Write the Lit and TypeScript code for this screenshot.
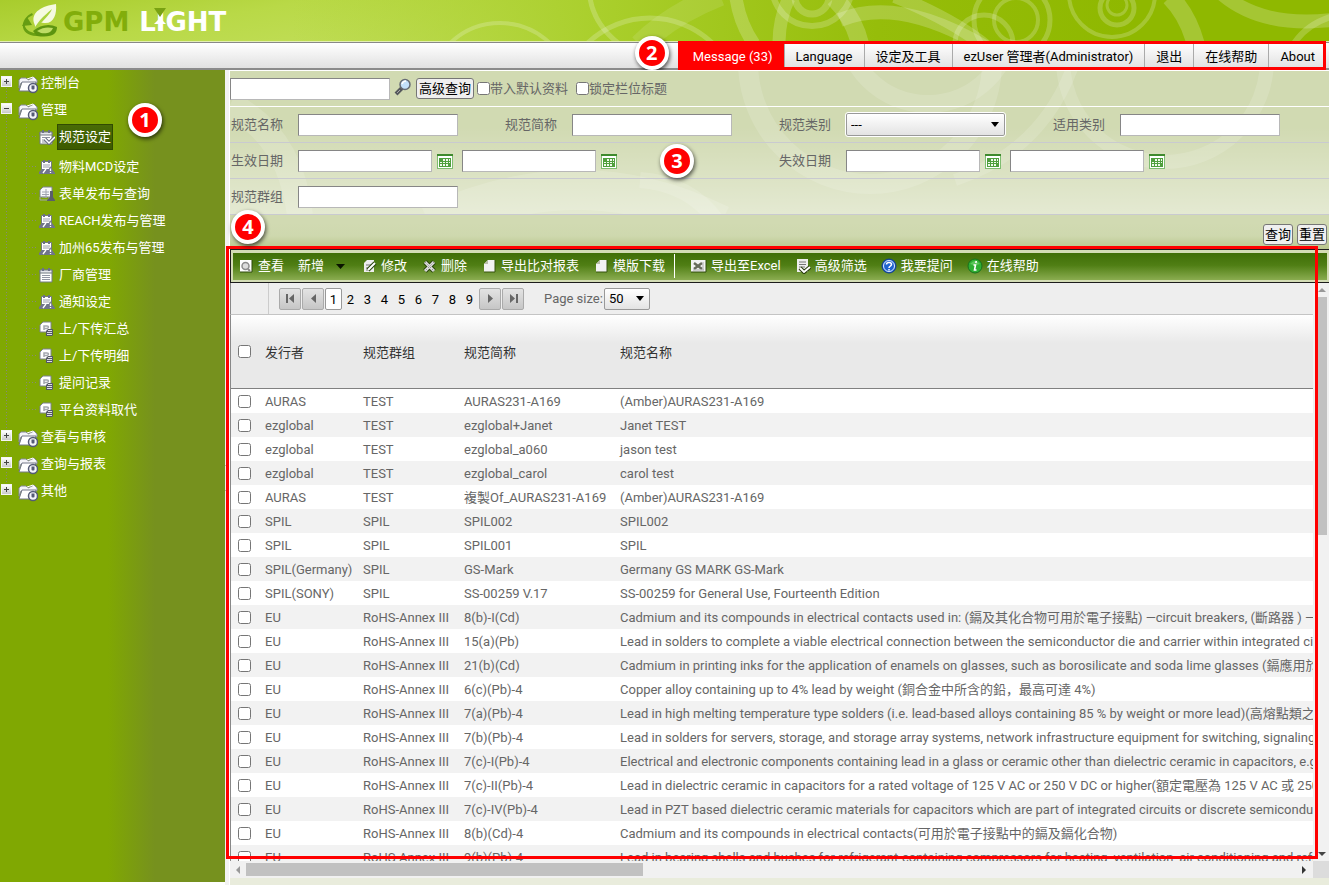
import { LitElement, html, css, svg, nothing } from "lit";
import { customElement } from "lit/decorators.js";

type Row = [string, string, string, string];

const ROWS: Row[] = [
  ["AURAS", "TEST", "AURAS231-A169", "(Amber)AURAS231-A169"],
  ["ezglobal", "TEST", "ezglobal+Janet", "Janet TEST"],
  ["ezglobal", "TEST", "ezglobal_a060", "jason test"],
  ["ezglobal", "TEST", "ezglobal_carol", "carol test"],
  ["AURAS", "TEST", "複製Of_AURAS231-A169", "(Amber)AURAS231-A169"],
  ["SPIL", "SPIL", "SPIL002", "SPIL002"],
  ["SPIL", "SPIL", "SPIL001", "SPIL"],
  ["SPIL(Germany)", "SPIL", "GS-Mark", "Germany GS MARK GS-Mark"],
  ["SPIL(SONY)", "SPIL", "SS-00259 V.17", "SS-00259 for General Use, Fourteenth Edition"],
  ["EU", "RoHS-Annex III", "8(b)-I(Cd)", "Cadmium and its compounds in electrical contacts used in: (鎘及其化合物可用於電子接點) —circuit breakers, (斷路器 ) — thermal sensing controls"],
  ["EU", "RoHS-Annex III", "15(a)(Pb)", "Lead in solders to complete a viable electrical connection between the semiconductor die and carrier within integrated circuit flip chip packages"],
  ["EU", "RoHS-Annex III", "21(b)(Cd)", "Cadmium in printing inks for the application of enamels on glasses, such as borosilicate and soda lime glasses (鎘應用於玻璃上的印刷油墨)"],
  ["EU", "RoHS-Annex III", "6(c)(Pb)-4", "Copper alloy containing up to 4% lead by weight (銅合金中所含的鉛，最高可達 4%)"],
  ["EU", "RoHS-Annex III", "7(a)(Pb)-4", "Lead in high melting temperature type solders (i.e. lead-based alloys containing 85 % by weight or more lead)(高熔點類之焊料中的鉛)"],
  ["EU", "RoHS-Annex III", "7(b)(Pb)-4", "Lead in solders for servers, storage, and storage array systems, network infrastructure equipment for switching, signaling, transmission"],
  ["EU", "RoHS-Annex III", "7(c)-I(Pb)-4", "Electrical and electronic components containing lead in a glass or ceramic other than dielectric ceramic in capacitors, e.g. piezoelectronic devices"],
  ["EU", "RoHS-Annex III", "7(c)-II(Pb)-4", "Lead in dielectric ceramic in capacitors for a rated voltage of 125 V AC or 250 V DC or higher(額定電壓為 125 V AC 或 250 V DC 以上)"],
  ["EU", "RoHS-Annex III", "7(c)-IV(Pb)-4", "Lead in PZT based dielectric ceramic materials for capacitors which are part of integrated circuits or discrete semiconductors"],
  ["EU", "RoHS-Annex III", "8(b)(Cd)-4", "Cadmium and its compounds in electrical contacts(可用於電子接點中的鎘及鎘化合物)"],
  ["EU", "RoHS-Annex III", "9(b)(Pb)-4", "Lead in bearing shells and bushes for refrigerant-containing compressors for heating, ventilation, air conditioning and refrigeration"],
];

const MENU = ["Message (33)", "Language", "设定及工具", "ezUser 管理者(Administrator)", "退出", "在线帮助", "About"];

const CHILDREN: [string, string][] = [
  ["规范设定", "check"],
  ["物料MCD设定", "alert"],
  ["表单发布与查询", "stamp"],
  ["REACH发布与管理", "alert"],
  ["加州65发布与管理", "alert"],
  ["厂商管理", "list"],
  ["通知设定", "alert"],
  ["上/下传汇总", "record"],
  ["上/下传明细", "record"],
  ["提问记录", "record"],
  ["平台资料取代", "record"],
];

const sheet = svg`<path d="M1 3h12v12H1z" fill="#fff" stroke="#737a80"/><path d="M1 3h12v3H1z" fill="#e6e7ee" stroke="#737a80"/><path d="M4 1v3M10 1v3" stroke="#6c7188" stroke-width="2"/>`;

const treeIcons: Record<string, unknown> = {
  folder: svg`<path d="M1 5l2-2h5l2 2 6-3 3 3v3H3L1 13z" fill="#f4f4f8" stroke="#878b9a"/><path d="M4 7h14l-3 9H1z" fill="#fff" stroke="#747989"/><path d="M9 4l6-2 2 3" fill="none" stroke="#fff"/><circle cx="15" cy="13" r="4.500" fill="#f5f5fa" stroke="#555b76" stroke-width="1.500"/><path d="M13.500 10.500v3q0 1 1 1h1q1 0 1-1v-3" fill="#555b76"/>`,
  check: svg`${sheet}<path d="M3 8.500h8M3 11h5M3 13h4" stroke="#8d92a0"/><path d="M6 10l4 4 6-6" fill="none" stroke="#63697d" stroke-width="3.500"/><path d="M6 10l4 4 6-6" fill="none" stroke="#fff" stroke-width="1.500"/>`,
  alert: svg`<path d="M2.500 2.500h10v9h-10z" fill="#fff" stroke="#737a80"/><path d="M5 1v3M10 1v3" stroke="#6c7188" stroke-width="2"/><path d="M4 6h7M4 8h6" stroke="#9a9eac"/><path d="M0 15v-2l3-3h10l3 4v1z" fill="#70758b"/><path d="M11 7l5 8H8z" fill="#70758b"/><path d="M4 14l3-4M11.500 9.500V12M11.500 13v1" stroke="#fff" stroke-width="1.300"/>`,
  stamp: svg`<path d="M4 1h9v10H1V4z" fill="#f8f8fa" stroke="#7c8190"/><path d="M1 11v3h9v-3M3 6h7M3 8.500h7M3 11h5M7 3v9" fill="none" stroke="#a0a4b0"/><path d="M11 5h3v6l2 3v1H8v-1l3-3z" fill="#5a5e6b"/>`,
  list: svg`${sheet}<path d="M3 8.500h8M3 10.500h8M3 12.500h8" stroke="#9296a3"/>`,
  record: svg`<path d="M4 1h8v10H1V4z" fill="#fff" stroke="#7c8190"/><path d="M5 9V5h3q1.500 0 1.500 1T8 7.500H5" fill="none" stroke="#a4a7ae" stroke-width="1.500"/><path d="M9 8h5v6l-1 1H7v-5z" fill="#545866"/><path d="M9 9.500h4M8 11.500h5M8 13.500h5" stroke="#fff" stroke-width=".8"/>`,
};

const toolIcons: Record<string, unknown> = {
  view: svg`<path d="M2 2h12v12H2z" fill="#fff"/><path d="M14 2v12H2" fill="none" stroke="#2f4a0c"/><circle cx="7.500" cy="8" r="3.500" fill="#ddd" stroke="#8c8c8c" stroke-width="1.500"/><path d="M10 11l2 2" stroke="#888" stroke-width="2"/>`,
  edit: svg`<path d="M3 5l3-3h7v12H3z" fill="#eee"/><path d="M5 7h5M5 10h4M5 12h3" stroke="#777"/><path d="M7 12l7-7" stroke="#28450a" stroke-width="4"/><path d="M7 12l7-7" stroke="#fff" stroke-width="2"/>`,
  remove: svg`<path d="M4 4l9 9M13 4l-9 9" stroke="#2b460e" stroke-width="5"/><path d="M4 4l9 9M13 4l-9 9" stroke="#dedede" stroke-width="3"/><path d="M4 4l9 9M13 4l-9 9" stroke="#777" stroke-dasharray="1 1.500"/>`,
  page: svg`<path d="M3 6l4-4h7v12H3z" fill="#f2f2f2"/><path d="M3 6h4V2" fill="#b9bda9"/><path d="M14 2v12H3" fill="none" stroke="#36540f"/>`,
  excel: svg`<path d="M0 2h15v12H0z" fill="#f3f3f3"/><path d="M15 2v12H0" fill="none" stroke="#2f4a0c"/><path d="M3 5l8 6M11 5l-8 6" stroke="#686c5c" stroke-width="2.500"/><path d="M12 4v8M2 12h11" stroke="#aaa"/>`,
  filter: svg`<path d="M2 1h11v13H2z" fill="#eee"/><path d="M4 4h7M4 6.500h7M4 9h6M4 11.500h4" stroke="#767676"/><path d="M5 10l4 4 6-5" fill="none" stroke="#263a0a" stroke-width="4"/><path d="M5 10l4 4 6-5" fill="none" stroke="#fff" stroke-width="2"/>`,
  ask: svg`<circle cx="8" cy="8" r="7" fill="#1f63d0" stroke="#123c8c"/><circle cx="8" cy="8" r="5.500" fill="none" stroke="#dce9ff"/><path d="M5.500 6.500q0-2 2.500-2t2.500 2q0 1-1.500 1.800-1 .5-1 1.700M8 11v1.500" fill="none" stroke="#fff" stroke-width="1.500"/>`,
  info: svg`<circle cx="8" cy="8" r="7" fill="#2eaf33" stroke="#19711d"/><path d="M3 6q5-6 10 0-5 2-10 0" fill="#5cc75c"/><path d="M9.300 3L8.800 5M6.500 7h2l-1 5h2" fill="none" stroke="#fff" stroke-width="1.600"/>`,
};

const calendar = html`<svg viewBox="0 0 16 16" width="16" height="16" aria-hidden="true"><path d="M0 1h16v15H0z" fill="#7fbd70"/><path d="M0 1h16v2H0z" fill="#3f8a2e"/><path d="M1 3h14v12H1z" fill="#fff"/><path d="M2 5h12v9H2z" fill="#4f9f3d"/><path d="M6 6h2v2H6zM9 6h2v2H9zM12 6h1v2h-1zM3 9h2v1H3zM6 9h2v1H6zM9 9h2v1H9zM12 9h1v1h-1zM3 11h2v2H3zM6 11h2v2H6zM9 11h2v2H9z" fill="#f0faed"/></svg>`;

@customElement("app-root")
export class AppRoot extends LitElement {
  static styles = css`
    :host {
      display: flex;
      flex-direction: column;
      height: 100vh;
      overflow: hidden;
      font: 13px/18px Roboto, "Noto Sans CJK SC", sans-serif;
      color: #666;
      background: #fff;
    }
    * { box-sizing: border-box; }
    svg { display: block; flex: none; }
    button, input, select { font: inherit; margin: 0; }
    a { color: inherit; text-decoration: none; }

    .banner {
      position: relative;
      display: flex;
      align-items: center;
      height: 42px;
      flex: none;
      padding-left: 20px;
      overflow: hidden;
      background: linear-gradient(170deg, #a8cc2c 0, #b9d947 20%, #cae36c 62%);
      border-bottom: 1px solid #e3efb4;
    }
    .banner::before {
      content: "";
      position: absolute;
      inset: 0;
      background: linear-gradient(90deg, transparent 22%, #aacf2c 45%, #96bd0a 66%, #8fb800 85%);
    }
    .swirls { position: absolute; right: 0; top: 0; }
    .leaf { position: relative; }
    .brand {
      position: relative;
      display: flex;
      gap: 10px;
      padding: 3px 0 0 3px;
      font: bold 26px/28px "DejaVu Sans", sans-serif;
      color: #82ad0b;
    }
    .light { position: relative; color: #fff; }
    .spark { position: absolute; left: 15px; top: 0; }

    .menubar {
      display: flex;
      justify-content: flex-end;
      height: 28px;
      flex: none;
      padding-right: 3px;
      background: linear-gradient(#fff, #e1e1e1);
      border-top: 1px solid #888;
      border-bottom: 2px solid #8b8b8b;
    }
    .menu { position: relative; display: flex; padding-left: 3px; color: #000; margin-bottom: -1px; }
    .menu::after {
      content: "";
      position: absolute;
      inset: -2px 0 -1px;
      border: 3px solid #f00;
      pointer-events: none;
    }
    .menu a { padding: 5px 11px 0; border-left: 1px solid #aaa; white-space: nowrap; }
    .menu .current { background: #f00; border-color: #f00; color: #fff; }

    .body {
      position: relative;
      display: grid;
      grid-template-columns: 225px 5px minmax(0, 1fr);
      grid-template-rows: minmax(0, 1fr);
      flex: 1;
      min-height: 0;
    }
    .side {
      margin-bottom: 3px;
      background: linear-gradient(90deg, #80a802 0 108px, #76911e 155px);
      color: #fff;
      overflow: hidden;
    }
    .tree, .tree ul { list-style: none; margin: 0; padding: 0; }
    .node { display: flex; align-items: center; height: 27px; padding: 0 0 2px 1px; }
    .toggle {
      width: 11px; height: 11px; padding: 0;
      border: 1px solid #f5f5f5;
      background: linear-gradient(#fff, #c9c9c9);
      margin-bottom: 2px;
      display: grid;
      place-items: center;
    }
    .node .folder { margin: 3px 3px 0 6px; }
    .tree { background: repeating-linear-gradient(#878a78 0 1px, transparent 1px 3px) 6px 12px / 1px 408px no-repeat; }
    .tree .leafs {
      padding-left: 26px;
      background: repeating-linear-gradient(#878a78 0 1px, transparent 1px 3px) 26px 0 / 1px 286px no-repeat;
    }
    .item { display: flex; align-items: center; height: 27px; gap: 2px; padding-bottom: 2px; }
    .item::before {
      content: "";
      width: 11px;
      height: 1px;
      background: repeating-linear-gradient(90deg, #878a78 0 1px, transparent 1px 3px);
    }
    .item a { padding: 0 2px; }
    .item.on { margin-bottom: 3px; }
    .on a { background: linear-gradient(#486b06, #3d5a00); border: 1px solid #314b02; padding: 3px 1px; }

    .split { background: #f2f2f2; border-right: 1px solid #fff; display: grid; align-items: center; }
    .grip { height: 26px; border: 1px solid #bbb; border-width: 1px 0; }
    .main { display: flex; flex-direction: column; min-width: 0; background: #e9ecdc; padding-bottom: 7px; }

    .query {
      position: relative;
      flex: none;
      height: 179px;
      border-top: 1px solid #fff;
      background: linear-gradient(#d1dab2 0 152px, #ced8ae 165px, #b9c68c);
      overflow: hidden;
    }
    .quick { position: relative; display: flex; align-items: center; height: 36px; border-bottom: 1px solid #fff; }
    .box {
      height: 22px;
      width: 160px;
      min-width: 0;
      padding: 0 4px;
      border: 1px solid;
      border-color: #868686 #b8b8b8 #b8b8b8 #868686;
      background: #fff;
    }
    .glass { padding: 0; border: 0; background: none; margin: 0 4px 4px; }
    .push {
      height: 21px;
      padding: 0 1px;
      border: 1px solid #767676;
      border-radius: 3px;
      background: #efefef;
      color: #000;
      line-height: 17px;
      white-space: nowrap;
    }
    .quick .push { padding: 0 2px; }
    .tick { display: flex; align-items: center; margin: 0 5px 0 3px; }
    input[type="checkbox"] { width: 13px; height: 13px; flex: none; }
    .fields { position: relative; background: linear-gradient(#fff0 20px, #ffffff6b); }
    .line { display: grid; grid-template-columns: repeat(4, 1fr); align-items: center; height: 36px; padding-right: 3px; border-bottom: 1px solid #c9cad0; }
    .field { display: flex; align-items: center; }
    .wide { grid-column: span 2; }
    .field label { width: 68px; padding-left: 1px; flex: none; }
    .date { width: 134px; }
    .pick { padding: 0; border: 0; background: none; margin: 0 9px 0 5px; }
    .drop {
      appearance: none;
      width: 159px;
      height: 23px;
      padding: 0 4px;
      border: 1px solid #999;
      border-radius: 2px;
      outline: 1px solid #fff;
      color: #000;
      background:
        url("data:image/svg+xml,%3Csvg xmlns='http://www.w3.org/2000/svg' width='8' height='5'%3E%3Cpath d='M0 0h8L4 5z'/%3E%3C/svg%3E") right 5px center no-repeat,
        linear-gradient(#fff, #e3e3e3);
    }
    .actions { position: relative; display: flex; justify-content: flex-end; gap: 4px; padding: 9px 2px 0; }

    .panel { position: relative; flex: 1; min-height: 0; display: flex; flex-direction: column; background: #f1f1f1; }
    .frame { position: absolute; inset: -3px 11px 19px -4px; border: 3px solid #f00; pointer-events: none; }
    .tools {
      flex: none;
      height: 34px;
      padding: 3px 2px 2px;
      background: #d3dcb5;
      border: solid #1c1c1c;
      border-width: 1px 0 1px 1px;
    }
    .strip {
      display: flex;
      align-items: center;
      gap: 14px;
      height: 27px;
      padding: 0 0 1px 5px;
      color: #fff;
      background: linear-gradient(#3f6e07, #4f7e14 45%, #8aac50);
      overflow: hidden;
    }
    .tool { display: flex; align-items: center; gap: 4px; padding: 0; border: 0; background: none; color: inherit; white-space: nowrap; }
    .tool .caret { margin: 0 2px 0 8px; }
    .bar { width: 1px; height: 24px; background: #fff; margin: 0 2px 0 -5px; }
    .pager {
      flex: none;
      display: flex;
      align-items: center;
      height: 32px;
      background: #eee;
      border-bottom: 1px solid #c4c4c4;
      border-left: 1px solid #888;
    }
    .pager::before { content: ""; width: 37px; align-self: stretch; border-right: 1px solid #ccc; margin-right: 10px; }
    .nav {
      width: 22px;
      height: 22px;
      margin-right: 1px;
      padding: 0;
      border: 1px solid #aaa;
      border-radius: 2px;
      background: linear-gradient(#e3e3e3, #c6c6c6);
      display: grid;
      place-items: center;
    }
    .num { width: 17px; height: 22px; line-height: 21px; text-align: center; border: 1px solid transparent; color: #000; }
    .num.on { background: #fff; border-color: #999; border-radius: 2px; }
    .nums { display: flex; margin-right: 1px; }
    .size { padding: 0 1px 0 19px; }
    .sizes { width: 46px; height: 22px; outline: 0; }

    .scroller { flex: 1; min-height: 0; display: grid; grid-template-columns: minmax(0, 1fr) 16px; grid-template-rows: minmax(0, 1fr) 17px; }
    .view { min-width: 0; overflow: hidden; background: #fff; display: flex; flex-direction: column; }
    .sheet { overflow: hidden; border-left: 1px solid #888; min-height: 0; }
    table { width: 100%; table-layout: fixed; border-collapse: separate; border-spacing: 0; }
    th, td { padding: 2px 0 0 7px; text-align: left; font-weight: normal; white-space: nowrap; overflow: hidden; }
    th { height: 74px; color: #333; border-bottom: 1px solid #808080; background: linear-gradient(#fff, #e9e9e9 28px); }
    td { height: 24px; }
    td input, th input { display: block; margin-bottom: 2px; }
    tr:nth-child(even) td { background: #f2f2f2; }
    .pick-col { width: 27px; }
    .a { width: 98px; }
    .b { width: 101px; }
    .c { width: 156px; }
    .vbar, .hbar { background: #f1f1f1; display: flex; align-items: center; }
    .vbar { flex-direction: column; padding: 5px 2px 4px 4px; }
    .vthumb { width: 10px; height: 238px; margin: 4px 0 auto; background: #c1c1c1; }
    .hbar { padding: 0 6px 0 5px; }
    .hthumb { width: 37%; height: 13px; margin: 0 auto 0 6px; background: #c1c1c1; }
    .corner { background: #dcdcdc; }

    .badge {
      position: absolute;
      width: 34px;
      height: 34px;
      border: 4px solid #fff;
      border-radius: 50%;
      background: #f00;
      color: #fff;
      font: bold 20px/26px "Open Sans", sans-serif;
      text-align: center;
      box-shadow: 1px 2px 4px #000a;
    }
    .b1 { left: 128px; top: 33px; }
    .b2 { left: -43px; top: -7px; }
    .b3 { left: 660px; top: 74px; }
    .b4 { left: 231px; top: 140px; }
  `;

  private tri(d: string, fill = "#222", w = 9, h = 9) {
    return html`<svg width=${w} height=${h} viewBox="0 0 ${w} ${h}" aria-hidden="true"><path d=${d} fill=${fill} /></svg>`;
  }

  private root(label: string, open = false) {
    return html`<div class="node">
      <button class="toggle" aria-label=${open ? "收起" : "展开"}>
        <svg width="7" height="7" viewBox="0 0 7 7"><path d=${open ? "M1 3.5h5" : "M1 3.5h5M3.500 1v5"} stroke="#444" /></svg>
      </button>
      <svg class="folder" width="20" height="19" viewBox="0 0 20 19" aria-hidden="true">${treeIcons.folder}</svg>
      <a href="#">${label}</a>
    </div>`;
  }

  private tool(label: string, icon?: string, caret = false) {
    return html`<button class="tool">
      ${icon ? html`<svg width="16" height="16" viewBox="0 0 16 16" aria-hidden="true">${toolIcons[icon]}</svg>` : nothing}
      <span>${label}</span>
      ${caret ? html`<svg class="caret" width="9" height="5" viewBox="0 0 9 5"><path d="M0 0h9L4.500 5z" fill="#0a1400" /></svg>` : nothing}
    </button>`;
  }

  private text(id: string, label: string) {
    return html`<div class="field"><label for=${id}>${label}</label><input class="box" id=${id} /></div>`;
  }

  private dates(id: string, label: string) {
    return html`<div class="field wide">
      <label for=${id}>${label}</label>
      <input class="box date" id=${id} /><button class="pick" aria-label="日历">${calendar}</button>
      <input class="box date" aria-label=${label} /><button class="pick" aria-label="日历">${calendar}</button>
    </div>`;
  }

  render() {
    return html`
      <header class="banner">
        <svg class="swirls" width="900" height="42" viewBox="429 0 900 42" fill="none" stroke="#fff" aria-hidden="true">
          <g stroke-opacity=".2">
            <circle cx="500" cy="95" r="72" stroke-width="4" />
            <circle cx="650" cy="108" r="90" stroke-width="5" />
            <path d="M590 -2q5 30 35 50" stroke-width="5" />
            <path d="M640 45q30-30 80-50" stroke-width="22" stroke-opacity=".1" />
            <path d="M736 -2q4 26 18 46" stroke-width="13" />
            <path d="M789 -2q-10 20-10 46" stroke-width="13" />
            <path d="M834 -2q20 20 26 46" stroke-width="18" />
            <circle cx="812" cy="-14" r="40" stroke-width="6" />
            <circle cx="812" cy="-3" r="17" stroke-width="7" />
            <path d="M840 20q60-25 150 30" stroke-width="14" />
            <path d="M895 -4q60 25 90 50" stroke-width="14" />
            <circle cx="1012" cy="20" r="38" stroke-width="5" />
            <circle cx="1016" cy="20" r="22" stroke-width="4" />
            <circle cx="984" cy="44" r="29" stroke-width="5" />
            <circle cx="1112" cy="-6" r="43" stroke-width="4" />
            <circle cx="1117" cy="8" r="17" stroke-width="5" />
            <circle cx="1117" cy="5" r="10" stroke-width="3" />
            <path d="M1170 -3q18 18 26 48" stroke-width="18" />
            <path d="M1222 -6q40 34 110 26" stroke-width="14" />
            <path d="M1290 50q14-26 44-34" stroke-width="6" />
          </g>
        </svg>
        <svg class="leaf" width="40" height="36" viewBox="0 0 40 36" aria-hidden="true">
          <path d="M13 12C0 17 3 29 16 30l2 3C0 34-2 17 12 10z" fill="#699f13" />
          <path d="M2 23l5-9 5 8z" fill="#669c12" />
          <path d="M14 20C11 9 22 3 36 1c1 10-2 20-12 19-5-1-7 1-8 5z" fill="#f5fae0" />
          <path d="M13 30C16 19 24 13 32 6 29 14 22 16 17 27z" fill="#a9d23c" />
          <path d="M13 28c7-6 16-8 24-4 0 7-5 11-20 9z" fill="#5d9410" />
          <path d="M17 28c6-4 11-4 16-3-2 5-7 6-12 5z" fill="#bedc65" />
        </svg>
        <div class="brand">
          <span>GPM</span>
          <span class="light">LIGHT
            <svg class="spark" width="12" height="24" viewBox="0 0 12 24" aria-hidden="true"><path d="M0 0h12L6 9z" fill="#79a212" /><path d="M0 16l6-6 6 6z" fill="#fff" /></svg>
          </span>
        </div>
      </header>

      <div class="menubar">
        <nav class="menu">
          ${MENU.map((m, i) => html`<a href="#" class=${i === 0 ? "current" : ""}>${m}</a>`)}
          <span class="badge b2">2</span>
        </nav>
      </div>

      <div class="body">
        <aside class="side">
          <ul class="tree">
            <li>${this.root("控制台")}</li>
            <li>
              ${this.root("管理", true)}
              <ul class="leafs">
                ${CHILDREN.map(([label, icon], i) => html`<li class="item ${i === 0 ? "on" : ""}">
                  <svg width="16" height="16" viewBox="0 0 16 16" aria-hidden="true">${treeIcons[icon]}</svg>
                  <a href="#">${label}</a>
                </li>`)}
              </ul>
            </li>
            <li>${this.root("查看与审核")}</li>
            <li>${this.root("查询与报表")}</li>
            <li>${this.root("其他")}</li>
          </ul>
        </aside>
        <div class="split"><div class="grip"></div></div>

        <main class="main">
          <form class="query" @submit=${(e: Event) => e.preventDefault()}>
            <svg class="swirls" width="1099" height="144" viewBox="230 71 1099 144" fill="none" stroke="#fff" stroke-opacity=".14" aria-hidden="true">
              <circle cx="928" cy="20" r="84" stroke-width="18" />
              <circle cx="870" cy="62" r="122" stroke-width="20" />
              <path d="M1075 60q-30 90-120 120" stroke-width="12" />
              <circle cx="1165" cy="60" r="102" stroke-width="14" />
              <path d="M230 105q60 30 70 110" stroke-width="26" />
              <path d="M430 225q150-70 290 0" stroke-width="40" />
              <path d="M640 180q50 4 76 40" stroke-width="16" />
            </svg>
            <div class="quick">
              <input class="box" aria-label="查询" />
              <button class="glass" aria-label="搜索">
                <svg width="18" height="18" viewBox="0 0 18 18" aria-hidden="true"><path d="M2 16l6-6" stroke="#55585c" stroke-width="4" /><path d="M3 15l3-3" stroke="#aaa" /><circle cx="11" cy="6.500" r="5" fill="#c3e0fa" stroke="#666b74" stroke-width="1.500" /><path d="M8 6q1-3 4-3" fill="none" stroke="#fff" stroke-width="1.500" /></svg>
              </button>
              <button class="push">高级查询</button>
              <label class="tick"><input type="checkbox" />带入默认资料</label>
              <label class="tick"><input type="checkbox" />锁定栏位标题</label>
            </div>
            <div class="fields">
              <div class="line">
                ${this.text("name", "规范名称")} ${this.text("short", "规范简称")}
                <div class="field"><label for="kind">规范类别</label><select class="drop" id="kind"><option>---</option></select></div>
                ${this.text("apply", "适用类别")}
              </div>
              <div class="line">${this.dates("from", "生效日期")} ${this.dates("until", "失效日期")}</div>
              <div class="line">${this.text("group", "规范群组")}</div>
            </div>
            <div class="actions"><button class="push">查询</button><button class="push">重置</button></div>
          </form>

          <section class="panel">
            <div class="tools">
              <div class="strip">
                ${this.tool("查看", "view")} ${this.tool("新增", undefined, true)} ${this.tool("修改", "edit")}
                ${this.tool("删除", "remove")} ${this.tool("导出比对报表", "page")} ${this.tool("模版下载", "page")}
                <span class="bar"></span>
                ${this.tool("导出至Excel", "excel")} ${this.tool("高级筛选", "filter")}
                ${this.tool("我要提问", "ask")} ${this.tool("在线帮助", "info")}
              </div>
            </div>
            <div class="scroller">
              <div class="view">
                <div class="pager">
                  <button class="nav" aria-label="第一页">${this.tri("M0 0h2v9H0zM8 0v9L3 4.500z", "#666")}</button>
                  <button class="nav" aria-label="上一页">${this.tri("M7 0v9L2 4.500z", "#666")}</button>
                  <div class="nums">
                    ${[1, 2, 3, 4, 5, 6, 7, 8, 9].map((n) => html`<a href="#" class="num ${n === 1 ? "on" : ""}">${n}</a>`)}
                  </div>
                  <button class="nav" aria-label="下一页">${this.tri("M2 0v9l5-4.500z", "#666")}</button>
                  <button class="nav" aria-label="最后一页">${this.tri("M1 0v9l5-4.500zM7 0h2v9H7z", "#666")}</button>
                  <label class="size" for="size">Page size:</label>
                  <select class="drop sizes" id="size"><option>50</option></select>
                </div>
                <div class="sheet">
                  <table>
                    <colgroup><col class="pick-col" /><col class="a" /><col class="b" /><col class="c" /><col /></colgroup>
                    <thead>
                      <tr><th><input type="checkbox" aria-label="全选" /></th><th>发行者</th><th>规范群组</th><th>规范简称</th><th>规范名称</th></tr>
                    </thead>
                    <tbody>
                      ${ROWS.map((r) => html`<tr><td><input type="checkbox" aria-label=${r[2]} /></td>${r.map((c) => html`<td>${c}</td>`)}</tr>`)}
                    </tbody>
                  </table>
                </div>
              </div>
              <div class="vbar">
                ${this.tri("M0 4h8L4 0z", "#999", 8, 5)}
                <div class="vthumb"></div>
                ${this.tri("M0 0h8L4 4z", "#444", 8, 5)}
              </div>
              <div class="hbar">
                ${this.tri("M5 0v8L1 4z", "#999", 5, 8)}
                <div class="hthumb"></div>
                ${this.tri("M0 0v8l4-4z", "#333", 5, 8)}
              </div>
              <div class="corner"></div>
            </div>
            <div class="frame"></div>
          </section>
        </main>
        <span class="badge b1">1</span>
        <span class="badge b3">3</span>
        <span class="badge b4">4</span>
      </div>
    `;
  }
}
